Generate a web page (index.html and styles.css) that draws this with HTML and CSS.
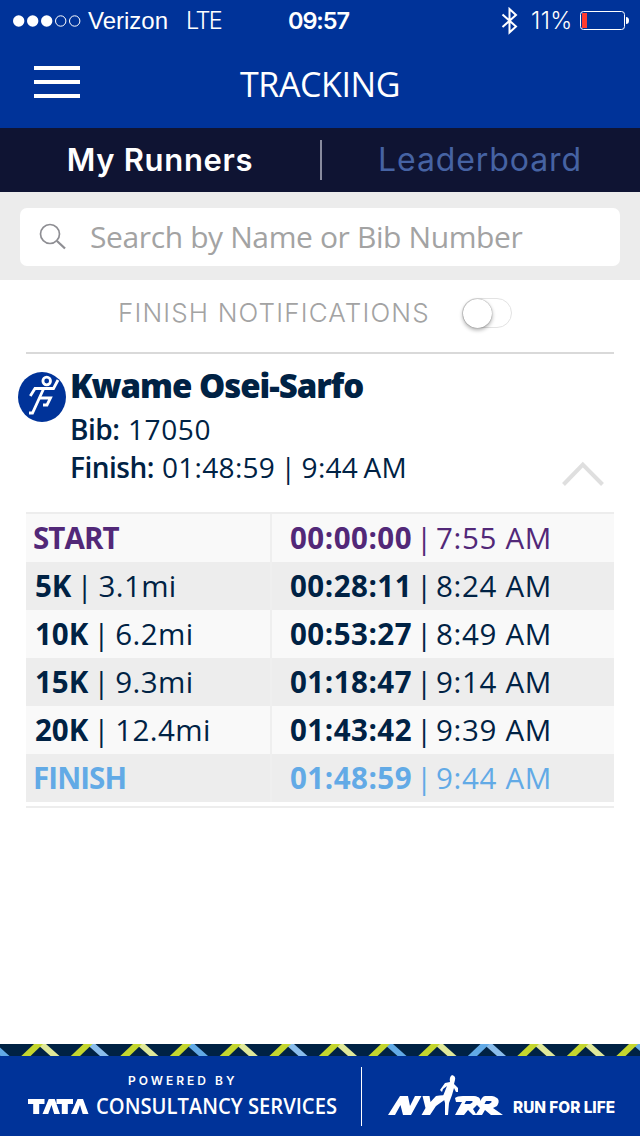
FILE: index.html
```html
<!DOCTYPE html>
<html lang="en">
<head>
<meta charset="utf-8">
<title>Tracking</title>
<link rel="stylesheet" href="styles.css">
</head>
<body>
<header class="header">
  <div class="status">
    <svg class="signal" width="68" height="12" viewBox="0 0 68 12"><g fill="#fff"><circle cx="5.7" cy="6" r="5.7"/><circle cx="19.7" cy="6" r="5.7"/><circle cx="33.7" cy="6" r="5.7"/></g><g fill="none" stroke="#fff"><circle cx="47.7" cy="6" r="5.2"/><circle cx="61.7" cy="6" r="5.2"/></g></svg>
    <span class="carrier">Verizon</span>
    <span class="network">LTE</span>
    <span class="clock">09:57</span>
    <svg class="bluetooth" width="18" height="28" viewBox="0 0 18 28" fill="none" stroke="#fff" stroke-width="2"><path d="M1.500 7.500 15 19.500 8.500 25.500V2L15 8 1.500 20"/></svg>
    <span class="percent">11%</span>
    <svg class="battery" width="50" height="20" viewBox="0 0 50 20"><rect x=".5" y=".5" width="44" height="18" rx="3" fill="none" stroke="#fff"/><rect x="2" y="2" width="5" height="15" fill="#ff3b30"/><path d="M46 6q3 0 3 3.500t-3 3.500z" fill="#fff"/></svg>
  </div>
  <div class="titlebar">
    <div class="menu"><i></i><i></i><i></i></div>
    <h1 class="title">TRACKING</h1>
  </div>
</header>
<nav class="tabs">
  <span class="tab tab-active">My Runners</span>
  <span class="tab-rule"></span>
  <span class="tab tab-idle">Leaderboard</span>
</nav>
<div class="search">
  <div class="search-box">
    <svg width="28" height="28" viewBox="0 0 28 28" fill="none" stroke="#8e8e93"><circle cx="11" cy="11" r="9.500" stroke-width="1.700"/><path d="M18 18 26 25.500" stroke-width="2.300"/></svg>
    <span class="placeholder">Search by Name or Bib Number</span>
  </div>
</div>
<main class="content">
  <div class="notify">
    <span class="notify-label">FINISH NOTIFICATIONS</span>
    <span class="switch"><i class="knob"></i></span>
  </div>
  <section class="runner">
    <svg class="avatar" width="48" height="50" viewBox="0 0 48 50"><ellipse cx="24" cy="25" rx="24" ry="25" fill="#039"/><g fill="none" stroke="#fff" stroke-width="2.800"><circle cx="28.700" cy="9" r="3.800"/><path d="M40 8 35.500 16.500H17L12.300 24"/><path d="M25.500 17 14.500 41H11"/><path d="M21.500 26H32.500L29 33H25"/></g></svg>
    <div class="details">
      <h2 class="name">Kwame Osei-Sarfo</h2>
      <p class="line"><b class="bib-label">Bib:</b><span class="bib">17050</span></p>
      <p class="line"><b class="fin-label">Finish:</b><span class="fin">01:48:59 | 9:44 AM</span></p>
    </div>
    <svg class="chevron" width="42" height="26" viewBox="0 0 42 26" fill="none" stroke="#dfdfdf" stroke-width="4"><path d="M1.500 23.500 20.800 3.500 40.500 23.500"/></svg>
  </section>
  <div class="splits">
    <div class="row start"><div class="cell word"><b>START</b></div><div class="cell time"><b>00:00:00</b><i>|</i><span>7:55 AM</span></div></div>
    <div class="row"><div class="cell"><b>5K</b><i>|</i><span>3.1mi</span></div><div class="cell time"><b>00:28:11</b><i>|</i><span>8:24 AM</span></div></div>
    <div class="row"><div class="cell"><b>10K</b><i>|</i><span>6.2mi</span></div><div class="cell time"><b>00:53:27</b><i>|</i><span>8:49 AM</span></div></div>
    <div class="row"><div class="cell"><b>15K</b><i>|</i><span>9.3mi</span></div><div class="cell time"><b>01:18:47</b><i>|</i><span>9:14 AM</span></div></div>
    <div class="row"><div class="cell"><b>20K</b><i>|</i><span>12.4mi</span></div><div class="cell time"><b>01:43:42</b><i>|</i><span>9:39 AM</span></div></div>
    <div class="row finish"><div class="cell word"><b>FINISH</b></div><div class="cell time"><b>01:48:59</b><i>|</i><span>9:44 AM</span></div></div>
  </div>
</main>
<footer class="footer">
  <svg class="pattern" width="640" height="12" viewBox="0 0 640 12">
    <defs><path id="r" d="M-3 0H6L19.500 12H10.500z"/><path id="l" d="M-6 0H3L-9.500 12H-18.700z"/></defs>
    <rect width="640" height="12" fill="#002244"/>
    <g fill="#dfe89a"><use href="#r" x="40"/><use href="#r" x="139"/><use href="#r" x="238.400"/><use href="#r" x="337.500"/><use href="#r" x="437"/><use href="#r" x="536"/><use href="#r" x="585.500"/></g>
    <g fill="#8abdec"><use href="#r" x="89.500"/><use href="#r" x="288"/><use href="#r" x="486.500"/></g>
    <g fill="#62aae6"><use href="#r" x="-10"/><use href="#r" x="188.500"/><use href="#r" x="387"/><use href="#r" x="635"/><use href="#l" x="486.500"/></g>
    <g fill="#c4d62e"><use href="#l" x="40"/><use href="#l" x="89.500"/><use href="#l" x="139"/><use href="#l" x="188.500"/><use href="#l" x="238.400"/><use href="#l" x="288"/><use href="#l" x="337.500"/><use href="#l" x="387"/><use href="#l" x="437"/><use href="#l" x="536"/><use href="#l" x="585.500"/><use href="#l" x="635"/></g>
  </svg>
  <div class="sponsors">
    <div class="tcs">
      <span class="powered">POWERED BY</span>
      <svg width="320" height="34" viewBox="0 -8 320 34" fill="#fff"><path d="M0 2H16.500V7H11.200V17H5.200V7H0zM20.700 2H26.700L32 17H26.200L23.500 8 20.200 17H14.500zM28.500 2H45V7H39.800V17H33.800V7H28.500zM49.500 2H55L60.500 17H54.700L52 8 48.800 17H43z"/><text x="68" y="17" class="consult" textLength="241" lengthAdjust="spacingAndGlyphs">CONSULTANCY SERVICES</text></svg>
    </div>
    <span class="sponsor-rule"></span>
    <div class="nyrr">
      <svg width="116" height="44" viewBox="0 0 116 44" fill="#fff"><path d="M0 41 12 22H20L22 32 27 22H33.500L23 41H15L12.500 31 7 41zM34.500 22H41.500L42.500 28 48 22Q55 20.500 62 22L48 32 42 41H33.500L37.500 34zM67 24Q69 22 75 22H86Q95 23 91 30 94 22 97 22H104Q114 24 109 32L105 34 115 41H103L97 36 94 41H85L80 36 76 41H67L74 28H68z"/><path d="M64 1Q68 2 67 6L66 10 70 14 70 18H68L66 14 64 21 61 29 60 41H57L57 29 55 22 59 12 55 15 54 18 52 16 57 9 62 8Q61 3 64 1z"/><path d="M78 27H84Q86 28 82 30H76.500zM98 27H103Q105 28 101 30H96.500zM85 35 89 31 92 34 88 40z" fill="#039"/></svg>
      <svg class="life-mark" width="108" height="26" viewBox="0 -6 108 26" fill="#fff"><text x="0" y="12" class="life" textLength="102" lengthAdjust="spacingAndGlyphs" dy="3">RUN FOR LIFE</text></svg>
    </div>
  </div>
</footer>
</body>
</html>
```
FILE: styles.css
```css
* { box-sizing: border-box; margin: 0; padding: 0; }
body { width: 640px; height: 1136px; display: flex; flex-direction: column; background: #fff; font-family: "Open Sans", "Noto Sans", sans-serif; color: #002244; white-space: nowrap; overflow: hidden; }
svg { display: block; flex: none; }
i { font-style: normal; }
.header { height: 128px; flex: none; background: #039; color: #fff; }
.status { height: 40px; display: flex; align-items: center; padding: 1px 0 0 13px; font: 23.500px/39px Inter, sans-serif; }
.carrier { width: 98px; padding-left: 7px; font: 24px/40px "Liberation Sans", sans-serif; }
.network { width: 102px; padding-left: 7px; font-weight: 300; letter-spacing: -1.600px; }
.clock { width: 220px; padding-left: 7px; font-weight: 600; letter-spacing: -1.100px; }
.percent { width: 60px; padding-left: 12px; font-weight: 300; letter-spacing: .400px; }
.battery { margin-left: 1px; }
.titlebar { height: 88px; display: grid; grid-template-columns: 34px 46px 480px 80px; align-items: center; }
.menu { grid-column: 2; display: grid; gap: 10px; padding-bottom: 4px; }
.menu i { height: 4px; background: #fff; }
.title { text-align: center; font-weight: 400; font-size: 34px; line-height: 48px; letter-spacing: -.400px; }
.tabs { height: 64px; flex: none; display: grid; grid-template-columns: 320px 2px 318px; align-items: center; background: #0f1433; font: 31px/64px Inter, sans-serif; text-align: center; }
.tab-active { color: #fff; font-weight: 600; letter-spacing: .700px; }
.tab-idle { color: #4663a3; font-weight: 400; font-size: 32px; letter-spacing: .900px; padding-right: 2px; }
.tab-rule { height: 40px; background: #888b9e; }
.search { height: 88px; flex: none; padding: 16px 20px 14px; background: #ececec; }
.search-box { height: 58px; border-radius: 7px; background: #fff; display: flex; align-items: center; padding-left: 19px; gap: 23px; }
.placeholder { font-size: 30px; line-height: 58px; color: #a3a3a3; letter-spacing: -.380px; }
.content { flex: 1; padding: 0 26px; }
.notify { height: 74px; display: flex; align-items: center; border-bottom: 2px solid #d9d9d9; padding: 0 0 7px 92px; }
.notify-label { width: 344px; font: 300 26px/40px Inter, sans-serif; color: #a3a3a3; letter-spacing: 1.150px; }
.switch { width: 50px; height: 30px; border: 1px solid #e3e3e3; border-radius: 15px; }
.knob { display: block; width: 29px; height: 29px; border-radius: 50%; background: #fff; box-shadow: 0 2px 4px #0005, 0 0 1px #0008; }
.runner { height: 158px; display: flex; margin-left: -8px; }
.avatar { margin-top: 18px; }
.details { width: 496px; padding: 9px 0 0 4px; }
.name { font-weight: 800; font-size: 33px; line-height: 46px; letter-spacing: -1.050px; }
.line { display: flex; font-size: 28px; line-height: 38px; position: relative; top: 1px; }
.line b { font-weight: 600; letter-spacing: -.500px; }
.bib { letter-spacing: .600px; }
.fin { letter-spacing: .300px; word-spacing: -2.200px; }
.bib-label { width: 58px; }
.fin-label { width: 92px; }
.chevron { margin-top: 107px; }
.splits { border-top: 2px solid #ededed; border-bottom: 2px solid #ededed; height: 296px; }
.row { height: 48px; display: grid; grid-template-columns: 246px 342px; background: #f9f9f9; font-size: 29.500px; line-height: 48px; }
.row:nth-child(even) { background: #ededed; }
.cell { display: flex; padding-left: 9px; border-right: 2px solid #efefef; }
.cell.word { padding-left: 7px; }
.cell b { font-weight: 700; }
.cell.word b { letter-spacing: -.900px; }
.cell i { width: 16px; margin: 0 6px 0 5px; text-align: center; }
.cell span { letter-spacing: .400px; }
.cell.time { padding-left: 18px; border: 0; }
.time b { width: 122px; letter-spacing: .500px; }
.cell.time i { margin: 0 4px; }
.cell.time span { letter-spacing: .700px; }
.start { color: #522878; }
.finish { color: #62aae6; }
.footer { height: 92px; flex: none; background: #039; color: #fff; }
.sponsors { height: 80px; display: flex; align-items: center; }
.tcs { width: 361px; padding-left: 28px; }
.powered { display: block; padding-left: 100px; font: 600 12px/16px Inter, sans-serif; letter-spacing: 3px; padding-top: 3px; }
.consult { font: 600 21px "Open Sans", sans-serif; }
.sponsor-rule { width: 1px; height: 59px; background: #fff; }
.nyrr { display: flex; align-items: end; padding-left: 26px; gap: 9px; }
.life { font: 800 16px Inter, sans-serif; }
```
